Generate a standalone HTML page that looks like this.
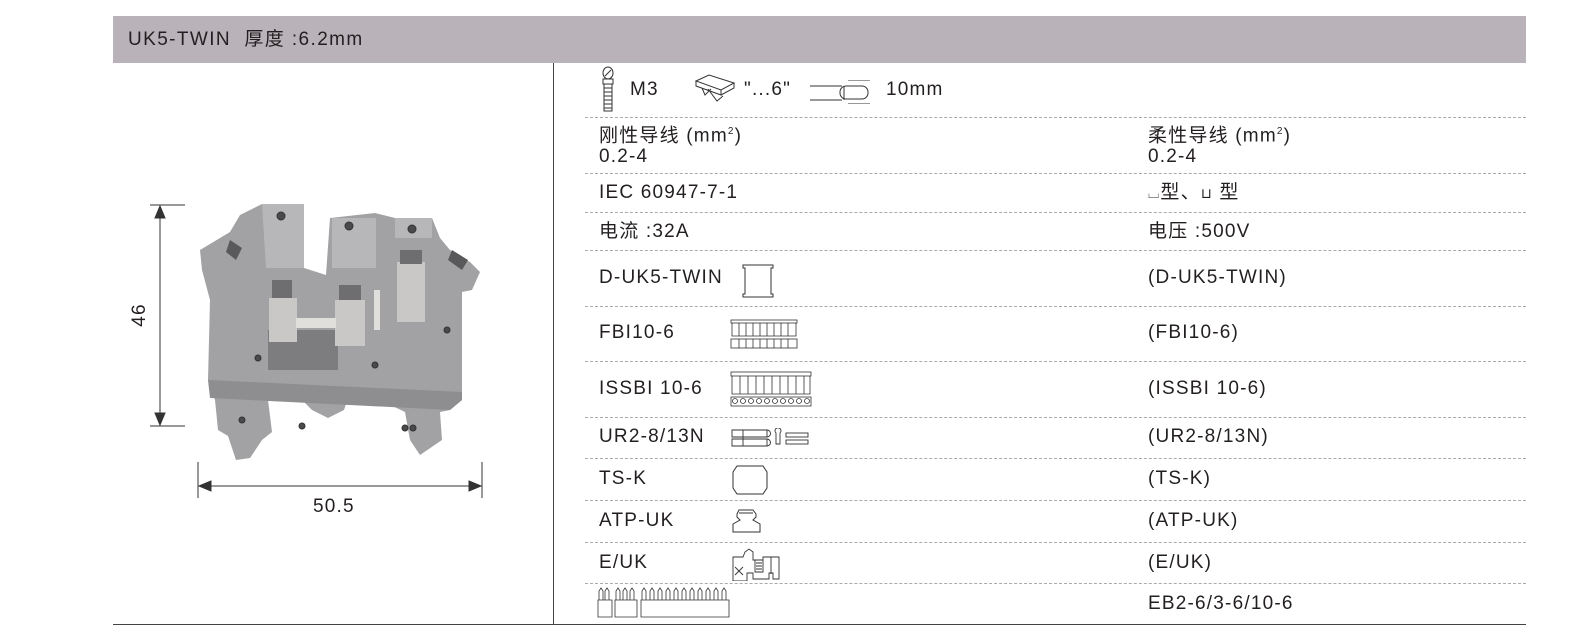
<!DOCTYPE html>
<html><head><meta charset="utf-8"><style>
body{margin:0;width:1573px;height:641px;background:#fff;position:relative;overflow:hidden;font-family:"Liberation Sans","Noto Sans CJK SC",sans-serif;color:#231f20}
.a{position:absolute;white-space:nowrap;font-size:19px;line-height:20px;letter-spacing:1.2px}
.d{position:absolute;left:585px;width:941px;border-top:1px dashed #aaa;height:0}
svg{position:absolute}
</style></head><body>
<div style="position:absolute;left:113px;top:16px;width:1413px;height:47px;background:#b9b3b9"></div>
<div class="a" style="left:128px;top:30px;letter-spacing:1.4px">UK5-TWIN&nbsp; 厚度 :6.2mm</div>
<div style="position:absolute;left:553px;top:63px;width:1px;height:562px;background:#444"></div>
<div style="position:absolute;left:113px;top:624px;width:1413px;height:1px;background:#444"></div>

<div class="d" style="top:117px"></div><div class="d" style="top:173px"></div><div class="d" style="top:212px"></div><div class="d" style="top:250px"></div><div class="d" style="top:306px"></div><div class="d" style="top:361px"></div><div class="d" style="top:417px"></div><div class="d" style="top:458px"></div><div class="d" style="top:500px"></div><div class="d" style="top:542px"></div><div class="d" style="top:583px"></div>

<svg style="left:600px;top:66px" width="22" height="46" viewBox="0 0 22 46" fill="none" stroke="#333" stroke-width="1"><ellipse cx="8" cy="7" rx="5" ry="6"/><path d="M5 10L11 4"/><path d="M3 13h10v5H3z M4 18v27h8V18"/><path d="M4 22h8M4 26h8M4 30h8M4 34h8M4 38h8M4 42h8"/></svg>
<div class="a" style="left:630px;top:80px">M3</div>
<svg style="left:694px;top:73px" width="50" height="30" viewBox="0 0 50 30" fill="none" stroke="#333"><path d="M2 8L15 2L40 10L27 17Z M2 8v5l25 9v-5 M27 22l13-7v-5 M8 15l3 7l6-6 M14 16l9 12l6-5"/></svg>
<div class="a" style="left:744px;top:80px">"...6"</div>
<svg style="left:810px;top:80px" width="70" height="24" viewBox="0 0 70 24" fill="none" stroke="#333"><path d="M0 6h32M0 20h32"/><rect x="30" y="6" width="28" height="13" rx="6"/><path d="M38 0h22M38 24h22M34 6v14"/></svg>
<div class="a" style="left:886px;top:80px">10mm</div>

<div class="a" style="left:599px;top:122px">刚性导线 (mm<sup style="font-size:10px">2</sup>)</div>
<div class="a" style="left:599px;top:147px">0.2-4</div>
<div class="a" style="left:1148px;top:122px">柔性导线 (mm<sup style="font-size:10px">2</sup>)</div>
<div class="a" style="left:1148px;top:147px">0.2-4</div>

<div class="a" style="left:599px;top:183px">IEC 60947-7-1</div>
<div class="a" style="left:1148px;top:183px"><span style="font-size:14px">⌴</span>型、<span style="font-size:14px">⊔</span> 型</div>
<div class="a" style="left:599px;top:222px">电流 :32A</div>
<div class="a" style="left:1148px;top:222px">电压 :500V</div>

<div class="a" style="left:599px;top:268px">D-UK5-TWIN</div>
<svg style="left:740px;top:262px" width="36" height="36" viewBox="0 0 36 36" fill="none" stroke="#333"><path d="M3 3h30v3h-2v26h2v3H3v-3h2V6H3z"/></svg>
<div class="a" style="left:1148px;top:268px">(D-UK5-TWIN)</div>

<div class="a" style="left:599px;top:323px">FBI10-6</div>
<svg style="left:730px;top:318px" width="72" height="32" viewBox="0 0 72 32" fill="none" stroke="#333" stroke-width=".8"><rect x="1" y="2" width="66" height="3"/><path d="M2 5v13h64V5M9 5v13M16 5v13M23 5v13M30 5v13M37 5v13M44 5v13M51 5v13M58 5v13"/><rect x="1" y="21" width="66" height="9"/><path d="M9 21v9M16 21v9M23 21v9M30 21v9M37 21v9M44 21v9M51 21v9M58 21v9"/></svg>
<div class="a" style="left:1148px;top:323px">(FBI10-6)</div>

<div class="a" style="left:599px;top:379px">ISSBI 10-6</div>
<svg style="left:730px;top:370px" width="82" height="38" viewBox="0 0 82 38" fill="none" stroke="#333" stroke-width=".8"><rect x="1" y="2" width="80" height="4"/><path d="M2 6v18h78V6M10 6v18M18 6v18M26 6v18M34 6v18M42 6v18M50 6v18M58 6v18M66 6v18M74 6v18"/><rect x="1" y="27" width="80" height="9"/><g><circle cx="5" cy="31" r="2.5"/><circle cx="13" cy="31" r="2.5"/><circle cx="21" cy="31" r="2.5"/><circle cx="29" cy="31" r="2.5"/><circle cx="37" cy="31" r="2.5"/><circle cx="45" cy="31" r="2.5"/><circle cx="53" cy="31" r="2.5"/><circle cx="61" cy="31" r="2.5"/><circle cx="69" cy="31" r="2.5"/><circle cx="77" cy="31" r="2.5"/></g></svg>
<div class="a" style="left:1148px;top:379px">(ISSBI 10-6)</div>

<div class="a" style="left:599px;top:427px">UR2-8/13N</div>
<svg style="left:731px;top:428px" width="80" height="20" viewBox="0 0 80 20" fill="none" stroke="#333" stroke-width=".9"><path d="M1 2h35v7H1zM1 11h35v7H1zM12 2v16M36 2a3 3 0 0 1 0 7M36 11a3 3 0 0 1 0 7"/><path d="M45 5a3 3 0 1 1 4 0v11h-4z"/><rect x="55" y="5" width="22" height="4"/><rect x="55" y="12" width="22" height="4"/></svg>
<div class="a" style="left:1148px;top:427px">(UR2-8/13N)</div>

<div class="a" style="left:599px;top:469px">TS-K</div>
<svg style="left:731px;top:464px" width="40" height="32" viewBox="0 0 40 32" fill="none" stroke="#333"><path d="M6 2h26l4 6v16l-4 6H6l-4-6V8z M2 8v16M36 8v16"/></svg>
<div class="a" style="left:1148px;top:469px">(TS-K)</div>

<div class="a" style="left:599px;top:511px">ATP-UK</div>
<svg style="left:731px;top:508px" width="32" height="26" viewBox="0 0 32 26" fill="none" stroke="#333"><path d="M8 2h14l3 4v3l-3 3 7 4v8H2v-8l7-4-3-3V6z M8 5h14"/></svg>
<div class="a" style="left:1148px;top:511px">(ATP-UK)</div>

<div class="a" style="left:599px;top:553px">E/UK</div>
<svg style="left:731px;top:545px" width="52" height="36" viewBox="0 0 52 36" fill="none" stroke="#333" stroke-width=".9"><path d="M2 12h10l2-5 4-3 4 3v8h10v-3h16v22h-6v-6h-4v6H22v-6h-6v8H2z M24 15h8v12h-8z M25 18h6M25 21h6M25 24h6 M40 12v17 M4 22l8 8 M4 30l8-8"/></svg>
<div class="a" style="left:1148px;top:553px">(E/UK)</div>

<svg style="left:597px;top:586px" width="150" height="34" viewBox="0 0 150 34" fill="none" stroke="#333" stroke-width=".8">
<path d="M1 14h14v17H1zM18 14h22v17H18zM44 14h88v17H44z"/>
<path d="M2 14V5l2-3 2 3v9M8 14V5l2-3 2 3v9M19 14V5l2-3 2 3v9M26 14V5l2-3 2 3v9M33 14V5l2-3 2 3v9M45 14V5l2-3 2 3v9M53 14V5l2-3 2 3v9M61 14V5l2-3 2 3v9M69 14V5l2-3 2 3v9M77 14V5l2-3 2 3v9M85 14V5l2-3 2 3v9M93 14V5l2-3 2 3v9M101 14V5l2-3 2 3v9M109 14V5l2-3 2 3v9M117 14V5l2-3 2 3v9M125 14V5l2-3 2 3v9"/></svg>
<div class="a" style="left:1148px;top:594px">EB2-6/3-6/10-6</div>

<svg style="left:130px;top:195px" width="370" height="330" viewBox="130 195 370 330" fill="none" stroke="#333">
<path d="M150 205h35M150 426h35M160 210v212M198 462v36M482 462v36M203 486h274"/>
<path d="M160 206l-5 12h10z M160 425l-5-12h10z M199 486l12-5v10z M481 486l-12-5v10z" fill="#333"/>
<g stroke="none">
<path fill="#a2a2a5" d="M200 250L230 232L240 215L262 204L304 204L304 268L326 275L330 218L375 213L395 218L432 218L440 238L450 250L470 262L480 272L472 290L462 292L462 400L450 410L440 412L442 440L420 455L410 440L405 412L380 400L350 392L344 410L328 418L312 410L300 398L280 398L268 400L272 432L262 440L250 458L236 460L228 436L218 430L215 400L208 380L210 300L202 270Z"/>
<path fill="#b7b7ba" d="M262 204h42v64h-38z M332 218h44v50h-44z M395 218h37v20h-37z"/>
<path fill="#8e8e91" d="M208 380L462 392L462 400L450 410L210 398Z"/>
<path fill="#7d7d80" d="M296 330h42v40h-42z M268 330h28v40h-28z"/>
<path fill="#c9c8c6" d="M269 298h28v44h-28z M335 300h30v46h-30z M397 262h28v60h-28z"/>
<path fill="#e0dfdc" d="M296 318h40v10h-40z M374 290h6v40h-6z"/>
<path fill="#6e6e70" d="M272 280h20v18h-20z M339 285h22v15h-22z M400 250h22v14h-22z"/>
<path fill="#59595b" d="M230 240l12 8-6 12-10-8z M452 250l16 10-6 10-14-10z"/>
</g>
<g fill="#4a4a4c"><circle cx="281" cy="216" r="4"/><circle cx="349" cy="226" r="4"/><circle cx="412" cy="229" r="4"/><circle cx="258" cy="358" r="3"/><circle cx="375" cy="365" r="3"/><circle cx="447" cy="330" r="3"/><circle cx="405" cy="428" r="3"/><circle cx="413" cy="428" r="3"/><circle cx="302" cy="426" r="3"/><circle cx="242" cy="420" r="3"/></g>
</svg>
<div class="a" style="left:128px;top:305px;transform:rotate(-90deg)">46</div>
<div class="a" style="left:313px;top:497px">50.5</div>
</body></html>
